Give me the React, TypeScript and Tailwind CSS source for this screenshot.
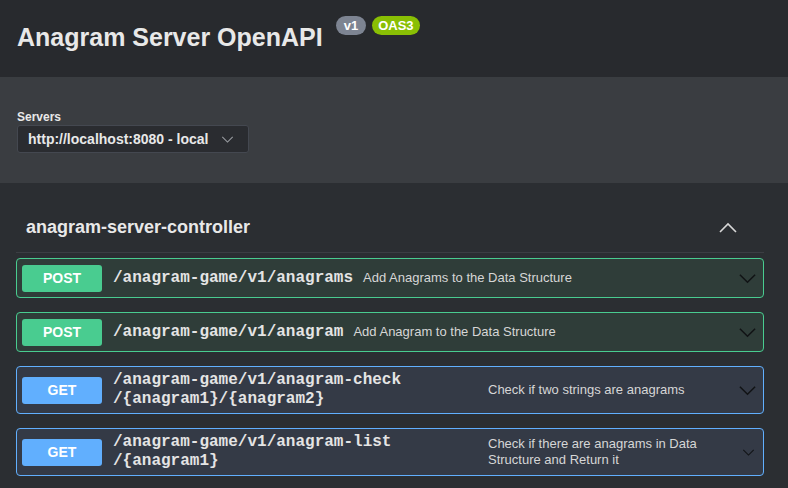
import React from "react";

type Op = {
  method: "POST" | "GET";
  path: string[];
  summary: string;
};

const ops: Op[] = [
  { method: "POST", path: ["/anagram-game/v1/anagrams"], summary: "Add Anagrams to the Data Structure" },
  { method: "POST", path: ["/anagram-game/v1/anagram"], summary: "Add Anagram to the Data Structure" },
  { method: "GET", path: ["/anagram-game/v1/anagram-check", "/{anagram1}/{anagram2}"], summary: "Check if two strings are anagrams" },
  { method: "GET", path: ["/anagram-game/v1/anagram-list", "/{anagram1}"], summary: "Check if there are anagrams in Data Structure and Return it" },
];

function Chevron({ up, className }: { up?: boolean; className?: string }) {
  return (
    <svg viewBox="0 0 20 20" className={className} fill="none" stroke="currentColor" strokeWidth="1.6">
      {up ? <path d="M2 14 L10 6 L18 14" /> : <path d="M2 6 L10 14 L18 6" />}
    </svg>
  );
}

function OpRow({ op }: { op: Op }) {
  const post = op.method === "POST";
  const tall = op.path.length > 1;
  return (
    <div
      className={`flex items-center rounded border pl-[5px] pr-[6px] mb-[14px] ${
        post ? "border-[#49cc90] bg-[#2f3d39]" : "border-[#61affe] bg-[#343a46]"
      } ${tall ? "h-[48px]" : "h-[40px]"}`}
    >
      <div
        className={`w-[80px] h-[27px] shrink-0 rounded-[3px] flex items-center justify-center text-white text-[14px] font-bold ${
          post ? "bg-[#49cc90]" : "bg-[#61affe]"
        }`}
      >
        {op.method}
      </div>
      <div
        className={`ml-[11px] font-['Liberation_Mono',monospace] font-bold text-[16px] leading-[19px] text-[#e4e4e4] ${
          tall ? "w-[365px] shrink-0" : "shrink-0"
        }`}
      >
        {op.path.map((p) => (
          <div key={p}>{p}</div>
        ))}
      </div>
      <div className={`${tall ? "ml-[10px] max-w-[235px]" : "ml-[10px]"} text-[13px] leading-[16px] text-[#d6d6d6]`}>
        {op.summary}
      </div>
      <div className="flex-1" />
      <Chevron className={`text-[#111315] shrink-0 ${op.path.length > 1 && op.summary.length > 40 ? "w-[13px] h-[13px] mr-[2px]" : "w-[19px] h-[19px]"}`} />
    </div>
  );
}

export default function App() {
  return (
    <div className="w-[788px] h-[488px] overflow-hidden bg-[#2b2e32] font-['Liberation_Sans',Arial,sans-serif]">
      <header className="h-[77px] bg-[#282a2e] pl-[17px] flex items-start">
        <h1 className="mt-[21px] text-[25px] leading-[32px] font-bold text-[#e8e8e8]">Anagram Server OpenAPI</h1>
        <div className="ml-[13px] mt-[16px] flex gap-[6px]">
          <span className="h-[19px] px-[8px] rounded-full bg-[#7d8492] text-white text-[13px] font-bold leading-[19px]">v1</span>
          <span className="h-[19px] px-[6px] rounded-full bg-[#89bf04] text-white text-[13px] font-bold leading-[19px]">OAS3</span>
        </div>
      </header>

      <section className="h-[106px] bg-[#3a3d41] pl-[17px] pt-[33px]">
        <div className="text-[12px] leading-[14px] font-bold text-[#e8e8e8]">Servers</div>
        <div className="mt-[1px] w-[232px] h-[28px] rounded-[3px] bg-[#2a2c30] border border-[#444850] flex items-center pl-[10px]">
          <span className="text-[14px] font-bold text-[#e8e8e8]">http://localhost:8080 - local</span>
          <Chevron className="ml-[13px] w-[13px] h-[13px] text-[#9a9da2]" />
        </div>
      </section>

      <main className="ml-[16px] mr-[24px]">
        <div className="h-[70px] flex items-center justify-between pl-[10px] pr-[26px] border-b border-[#3b3e43] pt-[20px]">
          <h2 className="text-[18px] font-bold text-[#e8e8e8]">anagram-server-controller</h2>
          <Chevron up className="w-[20px] h-[20px] text-[#d8d8d8]" />
        </div>
        <div className="pt-[5px]">
          {ops.map((op) => (
            <OpRow key={op.path.join("")} op={op} />
          ))}
        </div>
      </main>
    </div>
  );
}
